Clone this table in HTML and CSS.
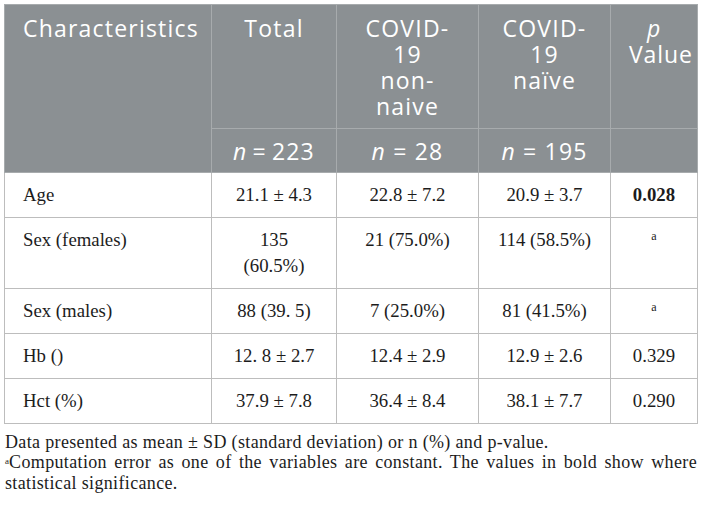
FILE: index.html
```html
<!DOCTYPE html>
<html lang="en">
<head>
<meta charset="utf-8">
<title>Characteristics table</title>
<link rel="stylesheet" href="styles.css">
</head>
<body>
<div class="wrap">
  <table class="data">
    <colgroup>
      <col class="c1"><col class="c2"><col class="c3"><col class="c4"><col class="c5">
    </colgroup>
    <thead>
      <tr class="h1">
        <th class="left" rowspan="2">Characteristics</th>
        <th>Total</th>
        <th>COVID-<br>19<br>non-<br>naive</th>
        <th>COVID-<br>19<br>naïve</th>
        <th class="pcol"><i>p</i><br>Value</th>
      </tr>
      <tr class="h2">
        <th><i>n</i>&#8201;=&#8201;223</th>
        <th><i>n</i> = 28</th>
        <th><i>n</i> = 195</th>
        <th class="pblank"></th>
      </tr>
    </thead>
    <tbody>
      <tr>
        <td class="left">Age</td>
        <td>21.1 ± 4.3</td>
        <td>22.8 ± 7.2</td>
        <td>20.9 ± 3.7</td>
        <td><b>0.028</b></td>
      </tr>
      <tr>
        <td class="left">Sex (females)</td>
        <td>135<br>(60.5%)</td>
        <td>21 (75.0%)</td>
        <td>114 (58.5%)</td>
        <td><sup>a</sup></td>
      </tr>
      <tr>
        <td class="left">Sex (males)</td>
        <td>88 (39. 5)</td>
        <td>7 (25.0%)</td>
        <td>81 (41.5%)</td>
        <td><sup>a</sup></td>
      </tr>
      <tr>
        <td class="left">Hb ()</td>
        <td>12. 8 ± 2.7</td>
        <td>12.4 ± 2.9</td>
        <td>12.9 ± 2.6</td>
        <td>0.329</td>
      </tr>
      <tr>
        <td class="left">Hct (%)</td>
        <td>37.9 ± 7.8</td>
        <td>36.4 ± 8.4</td>
        <td>38.1 ± 7.7</td>
        <td>0.290</td>
      </tr>
    </tbody>
  </table>
  <div class="notes">
    <p>Data presented as mean ± SD (standard deviation) or n (%) and p-value.</p>
    <p class="just"><span class="mark">ᵃ</span>Computation error as one of the variables are constant. The values in bold show where statistical significance.</p>
  </div>
</div>
</body>
</html>
```
FILE: styles.css
```css
html, body {
  margin: 0;
  padding: 0;
  background: #ffffff;
}

.wrap {
  padding: 4px 5px 0 4px;
  width: 693px;
}

.data {
  border-collapse: collapse;
  table-layout: fixed;
  width: 693px;
  border: 1px solid #c4c4c4;
}

.c1 { width: 207px; }
.c2 { width: 125px; }
.c3 { width: 142px; }
.c4 { width: 132px; }
.c5 { width: 87px; }

.data th {
  background: #8b9093;
  color: #ffffff;
  font-family: "Open Sans", Lato, sans-serif;
  font-weight: 400;
  font-size: 23px;
  letter-spacing: 1.2px;
  line-height: 26px;
  text-align: center;
  vertical-align: top;
  padding: 10px 18px 9px;
  border: 1px solid #a7abad;
  overflow: visible;
  white-space: nowrap;
}

.data th.left {
  text-align: left;
}

.data th.pcol {
  letter-spacing: 0.9px;
}

.data .h2 th {
  padding: 9px 18px 8px;
}

.data td {
  font-family: "Liberation Serif", "Times New Roman", serif;
  font-size: 18.8px;
  line-height: 26px;
  color: #1c1c1c;
  text-align: center;
  vertical-align: top;
  padding: 9px 8px;
  border: 1px solid #bdbdbd;
}

.data td.left {
  text-align: left;
  padding-left: 18px;
}

.data td b {
  font-weight: 700;
}

.data td sup {
  font-size: 12px;
  line-height: 0;
  vertical-align: 6px;
}

.notes {
  margin-top: 8px;
  padding-left: 1px;
  font-family: "Liberation Serif", "Times New Roman", serif;
  font-size: 18px;
  letter-spacing: 0.35px;
  line-height: 20.4px;
  color: #1c1c1c;
}

.notes p {
  margin: 0;
}

.notes .just {
  text-align: justify;
}

.notes .mark {
  font-family: "Liberation Serif", "DejaVu Serif", serif;
  font-size: 15px;
  line-height: 0;
  letter-spacing: 0;
}
```
